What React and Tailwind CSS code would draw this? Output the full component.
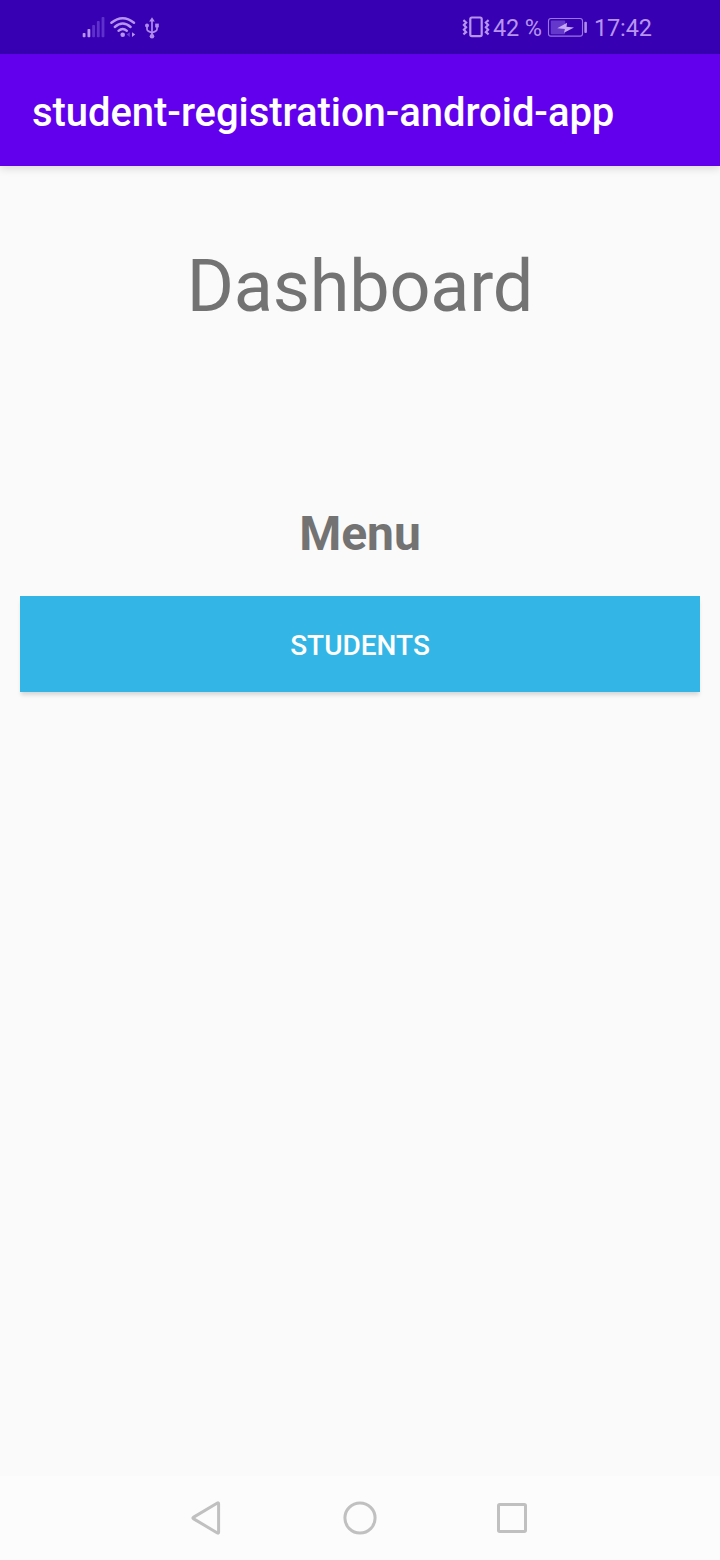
function LeftStatusIcons() {
  return (
    <svg width="84" height="28" viewBox="80 14 84 28" fill="none">
      <g fill="#b794f0">
        <rect x="82.7" y="33" width="2.8" height="4.3" rx="0.8" />
        <rect x="87.5" y="29" width="2.8" height="8.3" rx="0.8" />
      </g>
      <g fill="#5f30cb">
        <rect x="92.2" y="25" width="2.8" height="12.3" rx="0.8" />
        <rect x="96.9" y="21" width="2.8" height="16.3" rx="0.8" />
        <rect x="101.6" y="17" width="2.8" height="20.3" rx="0.8" />
      </g>
      <g stroke="#b794f0" strokeWidth="2.4" strokeLinecap="round">
        <path d="M111.4 22.8 Q122.7 13.6 134 22.8" />
        <path d="M114.8 27 Q122.7 20.2 130.6 27" />
        <path d="M118.5 30.8 Q122.7 27 126.9 30.8" />
      </g>
      <circle cx="122.7" cy="34.8" r="2.3" fill="#b794f0" />
      <path d="M129.8 32.2v4.8l-3.2-2.4z" fill="#6a3cd0" />
      <path d="M132 32.2v4.8l3.2-2.4z" fill="#b794f0" />
      <g stroke="#b08bec" strokeWidth="1.7" strokeLinejoin="round">
        <path d="M152 20v16" />
        <path d="M147 26v3.2q0 1.6 1.8 2.2l3.2 1.4 3.2-1.4q1.8-.6 1.8-2.2V26" />
      </g>
      <g fill="#b08bec">
        <path d="M152 17.2l2.8 4.3h-5.6z" />
        <circle cx="152" cy="36.3" r="2.3" />
        <circle cx="147" cy="25.5" r="2" />
        <rect x="155.2" y="23.6" width="3.6" height="3.8" />
      </g>
    </svg>
  );
}

function VibrateIcon() {
  return (
    <svg width="30" height="28" viewBox="461 14 30 28" fill="none" stroke="#b794f0">
      <rect x="470.3" y="17.5" width="11.4" height="18.6" rx="1.6" strokeWidth="2.2" />
      <path d="M463.4 20.2l2.7 2.3-2.2 2.4 2.2 2.4-2.2 2.4 2.2 2.4-2.7 2.3M488.6 20.2l-2.7 2.3 2.2 2.4-2.2 2.4 2.2 2.4-2.2 2.4 2.7 2.3" strokeWidth="2.2" />
    </svg>
  );
}

function BatteryIcon() {
  return (
    <svg width="42" height="28" viewBox="547 14 42 28">
      <rect x="548.5" y="18.5" width="34" height="17.6" rx="2.4" fill="none" stroke="#9b76e3" strokeWidth="1.1" />
      <rect x="550.8" y="20.6" width="14.4" height="13.6" rx="1" fill="#6538cc" />
      <path d="M557.3 28.2l9.8-5.4-.6 4 7.5.8-10 5.2.9-3.9z" fill="#c4a8f3" />
      <rect x="584.3" y="21.7" width="2.6" height="11.4" rx="1" fill="#b08bec" />
    </svg>
  );
}

function StatusBar() {
  return (
    <div className="flex h-[54px] items-center bg-[#3700b3] pt-0.5 pr-[68px] pl-20 text-[23.5px] text-[#b794f0]">
      <LeftStatusIcons />
      <div className="ml-auto flex items-center">
        <VibrateIcon />
        <span className="ml-0.5 w-[54px] whitespace-nowrap leading-7 tracking-[-0.15px]">42 %</span>
        <BatteryIcon />
        <span className="ml-[5px] w-[58px] whitespace-nowrap leading-7 tracking-[-0.15px]">17:42</span>
      </div>
    </div>
  );
}

function NavigationBar() {
  return (
    <nav className="flex h-[84px] items-center justify-center gap-[104px] bg-[#fcfcfc]">
      <button aria-label="Back" className="h-12 w-12">
        <svg width="48" height="48" viewBox="0 0 48 48" fill="none" stroke="#c0c0c0" strokeWidth="3" strokeLinejoin="round">
          <path d="M9.3 23.4L33.4 9q1.2-.6 1.2.8v28.4q0 1.4-1.2.8L9.3 24.6q-.8-.6 0-1.2z" />
        </svg>
      </button>
      <button aria-label="Home" className="h-12 w-12">
        <svg width="48" height="48" viewBox="0 0 48 48" fill="none" stroke="#c0c0c0" strokeWidth="3">
          <circle cx="24" cy="24" r="15.1" />
        </svg>
      </button>
      <button aria-label="Recent apps" className="h-12 w-12">
        <svg width="48" height="48" viewBox="0 0 48 48" fill="none" stroke="#c0c0c0" strokeWidth="3">
          <rect x="10.5" y="10.5" width="27" height="27" rx="1.2" />
        </svg>
      </button>
    </nav>
  );
}

export default function App() {
  return (
    <div className="flex h-[1560px] w-[720px] flex-col bg-[#fafafa] font-[Roboto,sans-serif]">
      <StatusBar />
      <header className="flex h-28 items-center bg-[#6200ee] px-8 pt-1.5 shadow-[0_3px_8px_rgba(0,0,0,0.12)]">
        <h1 className="text-[40px] leading-[48px] font-medium tracking-[-0.05px] whitespace-nowrap text-white">student-registration-android-app</h1>
      </header>
      <main className="flex flex-1 flex-col px-5 pt-[79px] text-center text-[#737373]">
        <h2 className="text-[72px] leading-[84px] font-normal tracking-[-0.2px]">Dashboard</h2>
        <h3 className="mt-[177px] text-[48px] leading-[56px] font-bold">Menu</h3>
        <button className="mt-[34px] h-24 bg-[#33b5e5] pt-1 text-[28px] font-medium text-white shadow-[0_4px_4px_-1px_rgba(0,0,0,0.14)]">
          STUDENTS
        </button>
      </main>
      <NavigationBar />
    </div>
  );
}
